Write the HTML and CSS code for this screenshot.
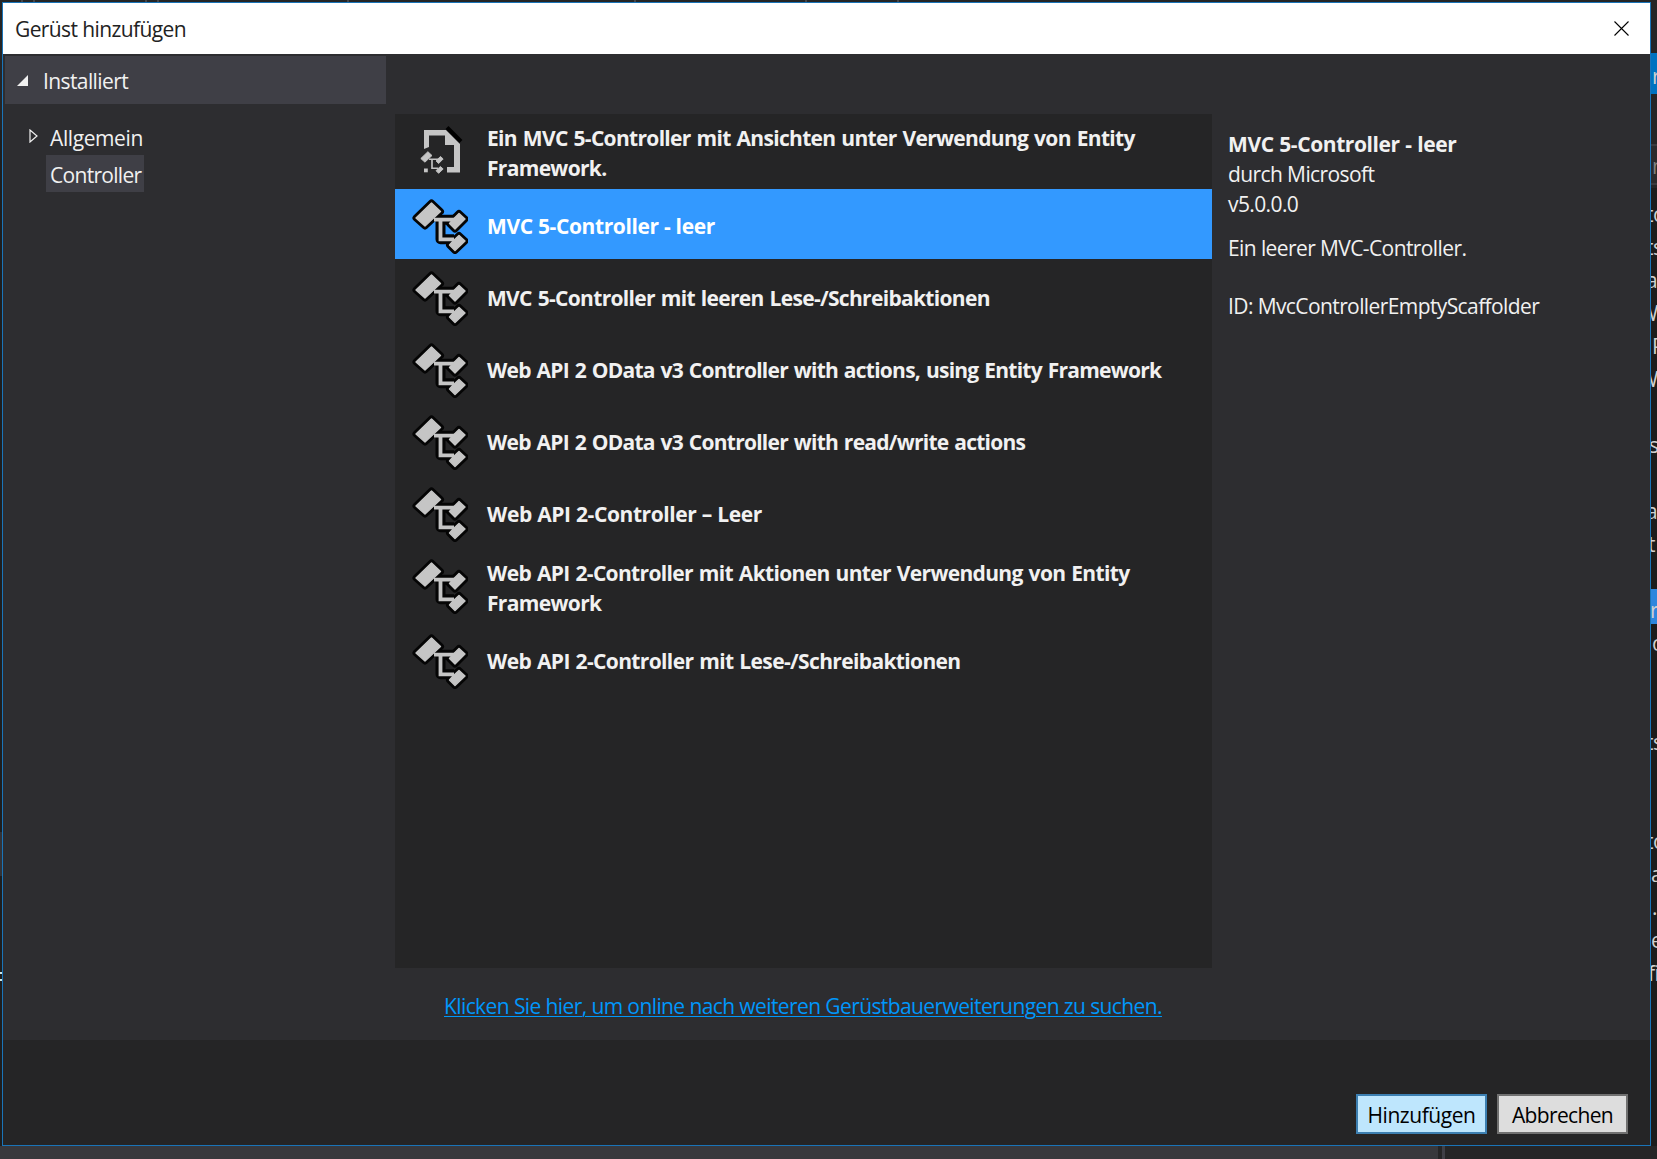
FILE: index.html
```html
<!DOCTYPE html>
<html lang="de">
<head>
<meta charset="utf-8">
<title>Gerüst hinzufügen</title>
<link rel="stylesheet" href="styles.css">
</head>
<body>
<svg class="defs" aria-hidden="true">
  <defs>
    <g id="shapes">
      <path d="M4 20 19.5 5 28.5 13.5 13 28Z"/>
      <path d="M47 15.5 53 21 43 31 37.5 25.5 41 21.5Z"/>
      <path d="M47 37.5 53 43 43 52.5 37.5 47 41 43Z"/>
    </g>
    <symbol id="controller" viewBox="0 0 56 56">
      <g stroke="#050505" stroke-width="7" stroke-linejoin="round" fill="#050505">
        <use href="#shapes"/>
        <path d="M24 21.7H44M28.5 21.7V41.3H42" stroke-width="10" fill="none"/>
      </g>
      <g fill="#c5c5c5" stroke="#c5c5c5" stroke-width="1.4" stroke-linejoin="round">
        <use href="#shapes"/>
        <path d="M22 21.7H44M28.5 21.7V41.3H42" stroke-width="3.8" stroke-linejoin="miter" fill="none"/>
      </g>
    </symbol>
    <symbol id="page" viewBox="0 0 56 56">
      <path d="M12 23V4H34L48 18V46.5H35V41H42V19H33V9.5H17V21Z" fill="#c5c5c5"/>
      <path d="M35 1.5 49 15.5" stroke="#000" stroke-width="4"/>
      <g transform="translate(7 23.4) scale(.456)" fill="#c5c5c5" stroke="#c5c5c5" stroke-width="2">
        <use href="#shapes"/>
        <path d="M22 21.7H44M28.5 21.7V41.3H42" stroke-width="3.6" fill="none"/>
      </g>
      <path d="M12 42.5h3.8v3.8H12z" fill="#c5c5c5"/>
    </symbol>
  </defs>
</svg>

<div class="backdrop">
  <i class="tick t1"></i><i class="tick t2"></i><i class="tick t3"></i><i class="tick t4"></i><i class="tick t5"></i><i class="tick t6"></i><i class="tick t7"></i><i class="tick t8"></i>
  <i class="edge"></i><i class="edge-mark"></i><i class="edge-text"></i>
  <i class="status"></i><i class="status-line"></i>
  <div class="panel">
    <i class="tab"></i><i class="search"></i><i class="row-selected"></i>
    <span style="top:61px;left:1px">r</span>
    <span style="top:151px;left:1px" class="dim">n</span>
    <span style="top:199px;left:-5px">to</span>
    <span style="top:232px;left:-5px">ts</span>
    <span style="top:265px;left:-5px">a</span>
    <span style="top:298px;left:-12px">W</span>
    <span style="top:331px;left:1px">P</span>
    <span style="top:364px;left:-12px">W</span>
    <span style="top:430px;left:-2px">s</span>
    <span style="top:496px;left:-5px">a</span>
    <span style="top:529px;left:-3px">t</span>
    <span style="top:595px;left:-1px">r</span>
    <span style="top:628px;left:1px">o</span>
    <span style="top:727px;left:-5px">ts</span>
    <span style="top:826px;left:-5px">to</span>
    <span style="top:859px;left:0">a</span>
    <span style="top:892px;left:1px">.</span>
    <span style="top:925px;left:0">e</span>
    <span style="top:958px;left:-3px">fi</span>
  </div>
</div>

<div class="dialog">
  <header class="titlebar">
    <h1 class="title">Gerüst hinzufügen</h1>
    <svg class="close" viewBox="0 0 15 15"><path d="M.5.5l14 14M14.5.5l-14 14" stroke="#000" stroke-width="1.1"/></svg>
  </header>
  <main class="content">
    <nav class="sidebar">
      <div class="group">
        <svg class="open" viewBox="0 0 11 11"><path d="M11 0V11H0Z" fill="#f1f1f1"/></svg>
        <span class="group-label">Installiert</span>
      </div>
      <div class="node">
        <svg class="closed" viewBox="0 0 9 14"><path d="M1 1V13L8 7Z" fill="none" stroke="#f1f1f1" stroke-width="1.2"/></svg>
        <span class="node-label">Allgemein</span>
      </div>
      <div class="node-selected"><span>Controller</span></div>
    </nav>
    <section class="center">
      <ul class="list">
        <li class="item first"><svg class="icon"><use href="#page"/></svg><span>Ein MVC 5-Controller mit Ansichten unter Verwendung von Entity<br>Framework.</span></li>
        <li class="item selected short"><svg class="icon"><use href="#controller"/></svg><span>MVC 5-Controller - leer</span></li>
        <li class="item"><svg class="icon"><use href="#controller"/></svg><span>MVC 5-Controller mit leeren Lese-/Schreibaktionen</span></li>
        <li class="item long"><svg class="icon"><use href="#controller"/></svg><span>Web API 2 OData v3 Controller with actions, using Entity Framework</span></li>
        <li class="item long"><svg class="icon"><use href="#controller"/></svg><span>Web API 2 OData v3 Controller with read/write actions</span></li>
        <li class="item short"><svg class="icon"><use href="#controller"/></svg><span>Web API 2-Controller – Leer</span></li>
        <li class="item tall"><svg class="icon"><use href="#controller"/></svg><span>Web API 2-Controller mit Aktionen unter Verwendung von Entity<br>Framework</span></li>
        <li class="item last"><svg class="icon"><use href="#controller"/></svg><span>Web API 2-Controller mit Lese-/Schreibaktionen</span></li>
      </ul>
      <div class="online"><a class="link">Klicken Sie hier, um online nach weiteren Gerüstbauerweiterungen zu suchen.</a></div>
    </section>
    <aside class="details">
      <h2 class="name">MVC 5-Controller - leer</h2>
      <p>durch Microsoft</p>
      <p>v5.0.0.0</p>
      <p class="description">Ein leerer MVC-Controller.</p>
      <p class="ident">ID: MvcControllerEmptyScaffolder</p>
    </aside>
  </main>
  <footer class="footer">
    <button class="button primary">Hinzufügen</button>
    <button class="button">Abbrechen</button>
  </footer>
</div>
</body>
</html>
```

FILE: styles.css
```css
* { box-sizing: border-box; margin: 0; padding: 0; }
body {
  width: 1657px; height: 1159px; overflow: hidden; padding: 2px;
  background: #252526; color: #f1f1f1;
  font: 21px/30px "Open Sans", "Noto Sans", sans-serif;
  letter-spacing: -0.6px; white-space: nowrap;
}
.defs { position: absolute; width: 0; height: 0; }
h1, h2 { font: inherit; }

/* application window behind the dialog */
.backdrop { position: absolute; inset: 0; overflow: hidden; }
.backdrop i { position: absolute; }
.tick { top: 0; width: 2px; height: 2px; background: #46464a; }
.t1 { left: 21px; } .t2 { left: 33px; } .t3 { left: 145px; } .t4 { left: 157px; }
.t5 { left: 347px; } .t6 { left: 634px; } .t7 { left: 805px; } .t8 { left: 897px; }
.edge { left: 0; top: 130px; width: 2px; height: 1029px; background: #1e1e1e; }
.edge-mark { left: 0; top: 832px; width: 2px; height: 44px; background: #333337; }
.edge-text { left: 0; top: 972px; width: 2px; height: 9px; border: solid #d0e8e8; border-width: 2px 0; }
.status { left: 0; top: 1146px; width: 1438px; height: 13px; background: #38383c; }
.status-line { left: 1442px; top: 1146px; width: 3px; height: 13px; background: #3f3f46; }
.panel { position: absolute; left: 1651px; top: 0; width: 6px; height: 1146px; overflow: hidden; background: linear-gradient(#252526 188px, #1c1c1c 188px); }
.panel span { position: absolute; color: #d0d0d0; }
.panel .dim { color: #808080; }
.tab { top: 53px; left: 0; width: 6px; height: 41px; background: #0072c0; }
.search { top: 144px; left: 0; width: 6px; height: 41px; border: solid #3a3a3e; border-width: 2px 0; background: #2a2a2c; }
.row-selected { top: 589px; left: 0; width: 6px; height: 35px; background: #2e86dd; }

.dialog {
  position: relative; width: 1649px; height: 1144px; display: flex; flex-direction: column;
  border: 1px solid #1a74b8; background: #2d2d30;
}
.titlebar {
  height: 51px; display: flex; align-items: center; justify-content: space-between;
  padding: 0 21px 0 12px; background: #fff; color: #222;
}
.title { padding-top: 1px; }
.close { width: 15px; height: 15px; }
.content { height: 986px; display: flex; }

.sidebar { width: 383px; padding: 2px 0 0 2px; }
.group { height: 48px; display: flex; align-items: center; padding-left: 12px; gap: 15px; background: #3f3f46; }
.group-label { padding-top: 2px; }
.open { width: 11px; height: 11px; }
.node { display: flex; align-items: center; height: 37px; margin-top: 14px; padding-left: 24px; gap: 12px; }
.node-label { padding-top: 2px; letter-spacing: -0.4px; }
.closed { width: 9px; height: 14px; margin-top: -2px; }
.node-selected { width: 98px; height: 37px; margin-left: 41px; padding: 5px 4px 0; letter-spacing: -0.7px; background: #3f3f46; }

.center { width: 817px; margin-left: 9px; padding-top: 60px; }
.list { height: 854px; list-style: none; background: #252526; font-weight: 700; letter-spacing: -0.68px; word-spacing: 1.1px; }
.item { height: 70px; margin-bottom: 2px; padding: 3px 0 0 17px; display: flex; align-items: center; gap: 19px; }
.item.first { height: 75px; margin-bottom: 0; }
.item.first .icon { margin-top: 2px; }
.item.tall { height: 73px; padding-top: 4px; letter-spacing: -0.66px; }
.item.tall .icon { margin-top: -4px; }
.item.short { letter-spacing: -0.4px; word-spacing: 0.3px; }
.item.long { letter-spacing: -0.75px; }
.item.last { letter-spacing: -0.64px; }
.item.selected { background: #3399ff; color: #fff; }
.icon { width: 56px; height: 56px; flex: none; }
.online { padding: 23px 0 0 49px; }
.link { color: #0097fb; text-decoration: underline; text-decoration-thickness: 1px; text-underline-offset: 2px; }

.details { padding: 75px 0 0 16px; }
.name { font-weight: 700; letter-spacing: -0.4px; word-spacing: 0.5px; }
.description { margin-top: 14px; }
.ident { margin-top: 28px; }

.footer { flex: 1; display: flex; justify-content: flex-end; gap: 10px; padding: 54px 22px 0 0; background: #252526; }
.button { width: 131px; height: 40px; padding-top: 2px; border: 2px solid #707070; background: #ddd; color: #000; font: inherit; letter-spacing: -0.65px; line-height: 34px; }
.button.primary { border-color: #3c7fb1; background: #bee6fd; letter-spacing: -0.45px; }
```
